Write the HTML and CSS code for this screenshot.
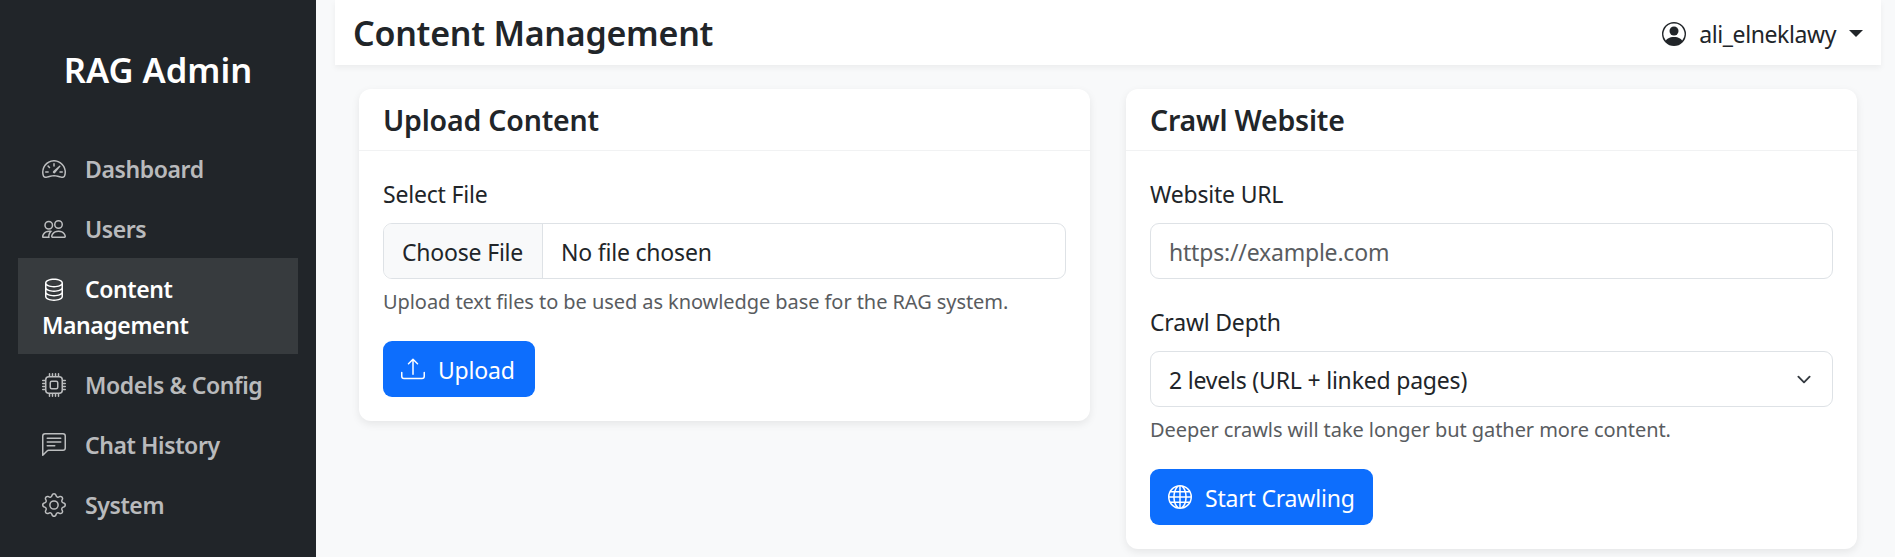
FILE: index.html
```html
<!DOCTYPE html>
<html lang="en">
<head>
    <meta charset="UTF-8">
    <meta name="viewport" content="width=device-width, initial-scale=1.0">
    <title>Content Management - RAG Admin</title>
    <link rel="stylesheet" href="styles.css">
</head>
<body>
    <div class="layout">
        <nav class="sidebar">
            <h4 class="brand">RAG Admin</h4>
            <ul class="nav">
                <li><a class="nav-link" href="#">
                    <svg class="icon nav-icon" viewBox="0 0 16 16" fill="currentColor"><path d="M8 4a.5.5 0 0 1 .5.5V6a.5.5 0 0 1-1 0V4.5A.5.5 0 0 1 8 4zM3.732 5.732a.5.5 0 0 1 .707 0l.915.914a.5.5 0 1 1-.708.708l-.914-.915a.5.5 0 0 1 0-.707zM2 10a.5.5 0 0 1 .5-.5h1.586a.5.5 0 0 1 0 1H2.5A.5.5 0 0 1 2 10zm9.5 0a.5.5 0 0 1 .5-.5h1.5a.5.5 0 0 1 0 1H12a.5.5 0 0 1-.5-.5zm.754-4.246a.389.389 0 0 0-.527-.02L7.547 9.31a.91.91 0 1 0 1.302 1.258l3.434-4.297a.389.389 0 0 0-.029-.518z"/><path fill-rule="evenodd" d="M0 10a8 8 0 1 1 15.547 2.661c-.442 1.253-1.845 1.602-2.932 1.25C11.309 13.488 9.475 13 8 13c-1.474 0-3.31.488-4.615.911-1.087.352-2.49.003-2.932-1.25A7.988 7.988 0 0 1 0 10zm8-7a7 7 0 0 0-6.603 9.329c.203.575.923.876 1.68.63C4.397 12.533 6.358 12 8 12s3.604.532 4.923.96c.757.245 1.477-.056 1.68-.631A7 7 0 0 0 8 3z"/></svg>Dashboard</a></li>
                <li><a class="nav-link" href="#">
                    <svg class="icon nav-icon" viewBox="0 0 16 16" fill="currentColor"><path d="M15 14s1 0 1-1-1-4-5-4-5 3-5 4 1 1 1 1h8zm-7.978-1A.261.261 0 0 1 7 12.996c.001-.264.167-1.03.76-1.72C8.312 10.629 9.282 10 11 10c1.717 0 2.687.63 3.24 1.276.593.69.758 1.457.76 1.72l-.008.002a.274.274 0 0 1-.014.002H7.022zM11 7a2 2 0 1 0 0-4 2 2 0 0 0 0 4zm3-2a3 3 0 1 1-6 0 3 3 0 0 1 6 0zM6.936 9.28a5.88 5.88 0 0 0-1.23-.247A7.35 7.35 0 0 0 5 9c-4 0-5 3-5 4 0 .667.333 1 1 1h4.216A2.238 2.238 0 0 1 5 13c0-1.01.377-2.042 1.09-2.904.243-.294.526-.569.846-.816zM4.92 10A5.493 5.493 0 0 0 4 13H1c0-.26.164-1.03.76-1.724.545-.636 1.492-1.256 3.16-1.275zM1.5 5.5a3 3 0 1 1 6 0 3 3 0 0 1-6 0zm3-2a2 2 0 1 0 0 4 2 2 0 0 0 0-4z"/></svg>Users</a></li>
                <li><a class="nav-link active" href="#">
                    <svg class="icon nav-icon" viewBox="0 0 16 16" fill="currentColor"><path d="M4.318 2.687C5.234 2.271 6.536 2 8 2s2.766.27 3.682.687C12.644 3.125 13 3.627 13 4c0 .374-.356.875-1.318 1.313C10.766 5.729 9.464 6 8 6s-2.766-.27-3.682-.687C3.356 4.875 3 4.373 3 4c0-.374.356-.875 1.318-1.313ZM13 5.698V7c0 .374-.356.875-1.318 1.313C10.766 8.729 9.464 9 8 9s-2.766-.27-3.682-.687C3.356 7.875 3 7.373 3 7V5.698c.271.202.58.378.904.525C4.978 6.711 6.427 7 8 7s3.022-.289 4.096-.777A4.92 4.92 0 0 0 13 5.698ZM14 4c0-1.007-.875-1.755-1.904-2.223C11.022 1.289 9.573 1 8 1s-3.022.289-4.096.777C2.875 2.245 2 2.993 2 4v9c0 1.007.875 1.755 1.904 2.223C4.978 15.71 6.427 16 8 16s3.022-.289 4.096-.777C13.125 14.755 14 14.007 14 13V4Zm-1 4.698V10c0 .374-.356.875-1.318 1.313C10.766 11.729 9.464 12 8 12s-2.766-.27-3.682-.687C3.356 10.875 3 10.373 3 10V8.698c.271.202.58.378.904.525C4.978 9.71 6.427 10 8 10s3.022-.289 4.096-.777A4.92 4.92 0 0 0 13 8.698Zm0 3V13c0 .374-.356.875-1.318 1.313C10.766 14.729 9.464 15 8 15s-2.766-.27-3.682-.687C3.356 13.875 3 13.373 3 13v-1.302c.271.202.58.378.904.525C4.978 12.71 6.427 13 8 13s3.022-.289 4.096-.777c.324-.147.633-.323.904-.525Z"/></svg>Content Management</a></li>
                <li><a class="nav-link" href="#">
                    <svg class="icon nav-icon" viewBox="0 0 16 16" fill="currentColor"><path d="M5 0a.5.5 0 0 1 .5.5V2h1V.5a.5.5 0 0 1 1 0V2h1V.5a.5.5 0 0 1 1 0V2h1V.5a.5.5 0 0 1 1 0V2A2.5 2.5 0 0 1 14 4.5h1.5a.5.5 0 0 1 0 1H14v1h1.5a.5.5 0 0 1 0 1H14v1h1.5a.5.5 0 0 1 0 1H14v1h1.5a.5.5 0 0 1 0 1H14a2.5 2.5 0 0 1-2.5 2.5v1.5a.5.5 0 0 1-1 0V14h-1v1.5a.5.5 0 0 1-1 0V14h-1v1.5a.5.5 0 0 1-1 0V14h-1v1.5a.5.5 0 0 1-1 0V14A2.5 2.5 0 0 1 2 11.5H.5a.5.5 0 0 1 0-1H2v-1H.5a.5.5 0 0 1 0-1H2v-1H.5a.5.5 0 0 1 0-1H2v-1H.5a.5.5 0 0 1 0-1H2A2.5 2.5 0 0 1 4.5 2V.5A.5.5 0 0 1 5 0zm-.5 3A1.5 1.5 0 0 0 3 4.5v7A1.5 1.5 0 0 0 4.5 13h7a1.5 1.5 0 0 0 1.5-1.5v-7A1.5 1.5 0 0 0 11.5 3h-7zM5 6.5A1.5 1.5 0 0 1 6.5 5h3A1.5 1.5 0 0 1 11 6.5v3A1.5 1.5 0 0 1 9.5 11h-3A1.5 1.5 0 0 1 5 9.5v-3zM6.5 6a.5.5 0 0 0-.5.5v3a.5.5 0 0 0 .5.5h3a.5.5 0 0 0 .5-.5v-3a.5.5 0 0 0-.5-.5h-3z"/></svg>Models &amp; Config</a></li>
                <li><a class="nav-link" href="#">
                    <svg class="icon nav-icon" viewBox="0 0 16 16" fill="currentColor"><path d="M14 1a1 1 0 0 1 1 1v8a1 1 0 0 1-1 1H4.414A2 2 0 0 0 3 11.586l-2 2V2a1 1 0 0 1 1-1h12zM2 0a2 2 0 0 0-2 2v12.793a.5.5 0 0 0 .854.353l2.853-2.853A1 1 0 0 1 4.414 12H14a2 2 0 0 0 2-2V2a2 2 0 0 0-2-2H2z"/><path d="M3 3.5a.5.5 0 0 1 .5-.5h9a.5.5 0 0 1 0 1h-9a.5.5 0 0 1-.5-.5zM3 6a.5.5 0 0 1 .5-.5h9a.5.5 0 0 1 0 1h-9A.5.5 0 0 1 3 6zm0 2.5a.5.5 0 0 1 .5-.5h5a.5.5 0 0 1 0 1h-5a.5.5 0 0 1-.5-.5z"/></svg>Chat History</a></li>
                <li><a class="nav-link" href="#">
                    <svg class="icon nav-icon" viewBox="0 0 16 16" fill="currentColor"><path d="M8 4.754a3.246 3.246 0 1 0 0 6.492 3.246 3.246 0 0 0 0-6.492zM5.754 8a2.246 2.246 0 1 1 4.492 0 2.246 2.246 0 0 1-4.492 0z"/><path d="M9.796 1.343c-.527-1.79-3.065-1.79-3.592 0l-.094.319a.873.873 0 0 1-1.255.52l-.292-.16c-1.64-.892-3.433.902-2.54 2.541l.159.292a.873.873 0 0 1-.52 1.255l-.319.094c-1.79.527-1.79 3.065 0 3.592l.319.094a.873.873 0 0 1 .52 1.255l-.16.292c-.892 1.64.901 3.434 2.541 2.54l.292-.159a.873.873 0 0 1 1.255.52l.094.319c.527 1.79 3.065 1.79 3.592 0l.094-.319a.873.873 0 0 1 1.255-.52l.292.16c1.64.893 3.434-.902 2.54-2.541l-.159-.292a.873.873 0 0 1 .52-1.255l.319-.094c1.79-.527 1.79-3.065 0-3.592l-.319-.094a.873.873 0 0 1-.52-1.255l.16-.292c.893-1.64-.902-3.433-2.541-2.54l-.292.159a.873.873 0 0 1-1.255-.52l-.094-.319zm-2.633.283c.246-.835 1.428-.835 1.674 0l.094.319a1.873 1.873 0 0 0 2.693 1.115l.291-.16c.764-.415 1.6.42 1.184 1.185l-.159.292a1.873 1.873 0 0 0 1.116 2.692l.318.094c.835.246.835 1.428 0 1.674l-.319.094a1.873 1.873 0 0 0-1.115 2.693l.16.291c.415.764-.42 1.6-1.185 1.184l-.291-.159a1.873 1.873 0 0 0-2.693 1.116l-.094.318c-.246.835-1.428.835-1.674 0l-.094-.319a1.873 1.873 0 0 0-2.692-1.115l-.292.16c-.764.415-1.6-.42-1.184-1.185l.159-.291A1.873 1.873 0 0 0 1.945 8.93l-.319-.094c-.835-.246-.835-1.428 0-1.674l.319-.094A1.873 1.873 0 0 0 3.06 4.377l-.16-.292c-.415-.764.42-1.6 1.185-1.184l.292.159a1.873 1.873 0 0 0 2.692-1.115l.094-.319z"/></svg>System</a></li>
            </ul>
        </nav>

        <main class="main">
            <header class="topbar">
                <h4 class="page-title">Content Management</h4>
                <div class="user-menu">
                    <svg class="icon" viewBox="0 0 16 16" fill="currentColor"><path d="M11 6a3 3 0 1 1-6 0 3 3 0 0 1 6 0z"/><path fill-rule="evenodd" d="M0 8a8 8 0 1 1 16 0A8 8 0 0 1 0 8zm8-7a7 7 0 0 0-5.468 11.37C3.242 11.226 4.805 10 8 10s4.757 1.225 5.468 2.37A7 7 0 0 0 8 1z"/></svg>
                    <span class="user-name">ali_elneklawy</span>
                    <span class="caret"></span>
                </div>
            </header>

            <div class="cards">
                <section class="card">
                    <h5 class="card-header">Upload Content</h5>
                    <form class="card-body">
                        <label class="form-label">Select File</label>
                        <div class="file-input">
                            <span class="file-btn">Choose File</span>
                            <span class="file-name">No file chosen</span>
                        </div>
                        <div class="form-text">Upload text files to be used as knowledge base for the RAG system.</div>
                        <button type="button" class="btn btn-upload">
                            <svg class="icon" viewBox="0 0 16 16" fill="currentColor"><path d="M.5 9.9a.5.5 0 0 1 .5.5v2.5a1 1 0 0 0 1 1h12a1 1 0 0 0 1-1v-2.5a.5.5 0 0 1 1 0v2.5a2 2 0 0 1-2 2H2a2 2 0 0 1-2-2v-2.5a.5.5 0 0 1 .5-.5z"/><path d="M7.646 1.146a.5.5 0 0 1 .708 0l3 3a.5.5 0 0 1-.708.708L8.5 2.707V11.5a.5.5 0 0 1-1 0V2.707L5.354 4.854a.5.5 0 1 1-.708-.708l3-3z"/></svg>
                            Upload
                        </button>
                    </form>
                </section>

                <section class="card">
                    <h5 class="card-header">Crawl Website</h5>
                    <form class="card-body">
                        <label class="form-label">Website URL</label>
                        <input class="form-control" type="text" placeholder="https://example.com">
                        <label class="form-label depth-label">Crawl Depth</label>
                        <select class="form-control form-select">
                            <option>2 levels (URL + linked pages)</option>
                        </select>
                        <div class="form-text">Deeper crawls will take longer but gather more content.</div>
                        <button type="button" class="btn">
                            <svg class="icon" viewBox="0 0 16 16" fill="currentColor"><path d="M0 8a8 8 0 1 1 16 0A8 8 0 0 1 0 8zm7.5-6.923c-.67.204-1.335.82-1.887 1.855A7.97 7.97 0 0 0 5.145 4H7.5V1.077zM4.09 4a9.267 9.267 0 0 1 .64-1.539 6.7 6.7 0 0 1 .597-.933A7.025 7.025 0 0 0 2.255 4H4.09zm-.582 3.5c.03-.877.138-1.718.312-2.5H1.674a6.958 6.958 0 0 0-.656 2.5h2.49zM4.847 5a12.5 12.5 0 0 0-.338 2.5H7.5V5H4.847zM8.5 5v2.5h2.99a12.495 12.495 0 0 0-.337-2.5H8.5zM4.51 8.5a12.5 12.5 0 0 0 .337 2.5H7.5V8.5H4.51zm3.99 0V11h2.653c.187-.765.306-1.608.338-2.5H8.5zM5.145 12c.138.386.295.744.468 1.068.552 1.035 1.218 1.65 1.887 1.855V12H5.145zm.182 2.472a6.696 6.696 0 0 1-.597-.933A9.268 9.268 0 0 1 4.09 12H2.255a7.024 7.024 0 0 0 3.072 2.472zM3.82 11a13.652 13.652 0 0 1-.312-2.5h-2.49c.062.89.291 1.733.656 2.5H3.82zm6.853 3.472A7.024 7.024 0 0 0 13.745 12H11.91a9.27 9.27 0 0 1-.64 1.539 6.688 6.688 0 0 1-.597.933zM8.5 12v2.923c.67-.204 1.335-.82 1.887-1.855.173-.324.33-.682.468-1.068H8.5zm3.68-1h2.146c.365-.767.594-1.61.656-2.5h-2.49a13.65 13.65 0 0 1-.312 2.5zm2.802-3.5a6.959 6.959 0 0 0-.656-2.5H12.18c.174.782.282 1.623.312 2.5h2.49zM11.27 2.461c.247.464.462.98.64 1.539h1.835a7.024 7.024 0 0 0-3.072-2.472c.218.284.418.598.597.933zM10.855 4a7.966 7.966 0 0 0-.468-1.068C9.835 1.897 9.17 1.282 8.5 1.077V4h2.355z"/></svg>
                            Start Crawling
                        </button>
                    </form>
                </section>
            </div>
        </main>
    </div>
</body>
</html>
```

FILE: styles.css
```css
* {
    box-sizing: border-box;
}

body {
    margin: 0;
    background-color: #f8f9fa;
    color: #212529;
    font-family: "Noto Sans", sans-serif;
    font-size: 23px;
    line-height: 36px;
    letter-spacing: -0.2px;
    overflow: hidden;
}

.layout {
    display: flex;
    height: 557px;
}

.icon {
    width: 24px;
    height: 24px;
    flex: none;
}

/* Sidebar */
.sidebar {
    width: 316px;
    flex: none;
    padding: 48px 18px 0;
    background-color: #212529;
    color: #fff;
}

.brand {
    margin: 0 0 47px;
    font-size: 34.5px;
    line-height: 43px;
    font-weight: 600;
    letter-spacing: 0;
    text-align: center;
}

.nav {
    list-style: none;
    margin: 0;
    padding: 0;
}

.nav-link {
    display: block;
    padding: 13px 24px 11px;
    color: rgba(255, 255, 255, 0.7);
    font-weight: 600;
    letter-spacing: -0.4px;
    text-decoration: none;
}

.nav-link.active {
    background-color: rgba(255, 255, 255, 0.1);
    color: #fff;
}

.nav-icon {
    margin-right: 19px;
    vertical-align: -3px;
}

/* Main */
.main {
    flex: 1;
    min-width: 0;
    padding: 0 14px 0 19px;
}

.topbar {
    display: flex;
    align-items: center;
    justify-content: space-between;
    height: 65px;
    padding: 2px 18px 0;
    background-color: #fff;
    box-shadow: 0 3px 6px rgba(0, 0, 0, 0.05);
}

.page-title {
    margin: 0;
    font-size: 34px;
    line-height: 43px;
    font-weight: 600;
    letter-spacing: -0.25px;
}

.user-menu {
    display: flex;
    align-items: center;
}

.user-name {
    margin-left: 13px;
    letter-spacing: -0.4px;
}

.caret {
    margin-left: 13px;
    border-top: 7px solid #212529;
    border-left: 7px solid transparent;
    border-right: 7px solid transparent;
}

/* Cards */
.cards {
    display: grid;
    grid-template-columns: 1fr 1fr;
    align-items: start;
    gap: 36px;
    padding: 24px 24px 0;
}

.card {
    background-color: #fff;
    border-radius: 12px;
    box-shadow: 0 3px 9px rgba(0, 0, 0, 0.08);
}

.card-header {
    margin: 0;
    padding: 13px 24px 11px;
    border-bottom: 1px solid #f1f2f3;
    font-size: 28.5px;
    line-height: 37px;
    font-weight: 600;
}

.card-body {
    padding: 24px;
}

.form-label {
    display: block;
    padding-top: 1px;
    margin-bottom: 11px;
}

.depth-label {
    margin-top: 24px;
}

.form-control {
    display: block;
    width: 100%;
    height: 56px;
    padding: 10px 18px 8px;
    border: 1px solid #dee2e6;
    border-radius: 9px;
    background-color: #fff;
    color: #212529;
    font: inherit;
    letter-spacing: inherit;
}

.form-control::placeholder {
    color: #595c5f;
}

.form-select {
    appearance: none;
    background-image: url("data:image/svg+xml,%3csvg xmlns='http://www.w3.org/2000/svg' viewBox='0 0 16 16'%3e%3cpath fill='none' stroke='%23343a40' stroke-linecap='round' stroke-linejoin='round' stroke-width='2' d='m2 5 6 6 6-6'/%3e%3c/svg%3e");
    background-repeat: no-repeat;
    background-position: right 18px center;
    background-size: 20px 15px;
}

.file-input {
    display: flex;
    align-items: center;
    height: 56px;
    border: 1px solid #dee2e6;
    border-radius: 9px;
    overflow: hidden;
}

.file-btn {
    display: flex;
    align-items: center;
    width: 159px;
    height: 100%;
    padding: 2px 18px 0;
    border-right: 1px solid #dee2e6;
    background-color: #f8f9fa;
}

.file-name {
    padding: 2px 18px 0;
}

.form-text {
    margin-top: 7px;
    margin-bottom: 23px;
    color: #595c5f;
    font-size: 20px;
    line-height: 31.5px;
    letter-spacing: -0.07px;
}

.btn {
    display: inline-flex;
    align-items: center;
    gap: 13px;
    height: 56px;
    padding: 2px 18px 0;
    border: none;
    border-radius: 9px;
    background-color: #0d6efd;
    color: #fff;
    font: inherit;
    letter-spacing: inherit;
}

.btn .icon {
    margin-top: -2px;
}

.btn-upload {
    padding-right: 20px;
}
```
